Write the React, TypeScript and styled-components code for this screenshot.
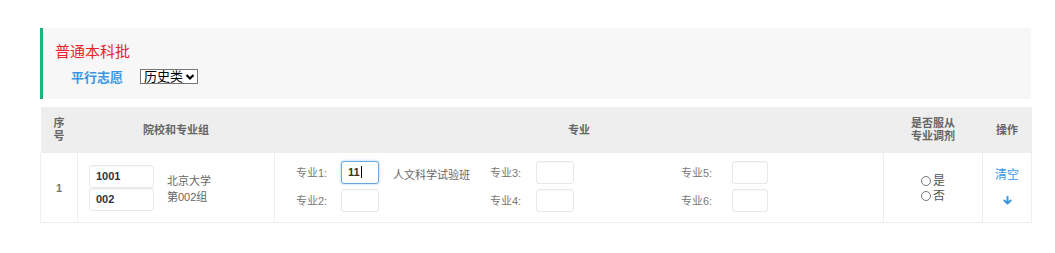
import React from "react";
import styled, { createGlobalStyle } from "styled-components";

const Global = createGlobalStyle`
  html, body { margin: 0; padding: 0; background: #fff; }
  body { font-family: "Liberation Sans", "Noto Sans CJK SC", sans-serif; color: #333; }
`;

const Page = styled.div`
  padding: 28px 0 0 40px;
  width: 991px;
`;

const Panel = styled.div`
  height: 71px;
  box-sizing: border-box;
  background: #f7f7f7;
  border-left: 3px solid #21b27c;
  padding: 15px 0 0 12px;
`;

const Title = styled.div`
  font-size: 15px;
  line-height: 18px;
  color: #e3262a;
`;

const FilterRow = styled.div`
  display: flex;
  align-items: center;
  gap: 17px;
  margin: 6px 0 0 16px;
`;

const FilterLabel = styled.span`
  font-size: 13px;
  font-weight: bold;
  color: #3a96e2;
`;

const FakeSelect = styled.span`
  display: inline-flex;
  align-items: center;
  gap: 2px;
  height: 15px;
  box-sizing: border-box;
  padding: 0 2px 0 3px;
  border: 1px solid #767676;
  background: #fff;
  font-size: 13px;
  line-height: 13px;
  color: #000;
`;

const Table = styled.table`
  margin-top: 8px;
  width: 991px;
  border-collapse: collapse;
  table-layout: fixed;
  font-size: 11px;
`;

const Th = styled.th<{ $w: number }>`
  width: ${(p) => p.$w}px;
  height: 46px;
  padding: 0;
  background: #eeeeee;
  color: #666;
  font-weight: bold;
  font-size: 11px;
  line-height: 13px;
  text-align: center;
`;

const Td = styled.td<{ $align?: string }>`
  height: 69px;
  padding: 0;
  border: 1px solid #eeeeee;
  border-top: none;
  text-align: ${(p) => p.$align || "center"};
  vertical-align: middle;
  color: #666;
`;

const SeqNum = styled.span`
  font-weight: bold;
  color: #777;
`;

const SchoolCell = styled.div`
  display: flex;
  align-items: center;
  padding-left: 11px;
  gap: 13px;
`;

const Stack = styled.div`
  display: flex;
  flex-direction: column;
`;

const Field = styled.span<{ $w: number; $focus?: boolean }>`
  display: flex;
  align-items: center;
  box-sizing: border-box;
  width: ${(p) => p.$w}px;
  height: 23px;
  padding-left: 6px;
  border: 1px solid ${(p) => (p.$focus ? "#6aa8de" : "#e8e8e8")};
  border-radius: 3px;
  background: #fff;
  box-shadow: ${(p) =>
    p.$focus ? "0 0 3px rgba(102,175,233,0.6)" : "inset 0 1px 1px rgba(0,0,0,0.03)"};
  font-size: 11px;
  font-weight: bold;
  color: #333;
`;

const Caret = styled.span`
  display: inline-block;
  width: 1px;
  height: 12px;
  background: #000;
  margin-left: 1px;
`;

const SchoolName = styled.div`
  font-size: 11px;
  line-height: 16px;
  color: #666;
  padding-top: 2px;
`;

const MajorGrid = styled.div`
  display: grid;
  grid-template-columns: 45px 38px 111px 46px 38px 107px 51px 36px;
  grid-template-rows: 23px 23px;
  row-gap: 5px;
  align-items: center;
  padding: 0 0 3px 21px;
  font-size: 11px;
`;

const Label = styled.span<{ $col: number; $row: number }>`
  grid-column: ${(p) => p.$col};
  grid-row: ${(p) => p.$row};
  color: #777;
`;

const Slot = styled.div<{ $col: number; $row: number }>`
  grid-column: ${(p) => p.$col};
  grid-row: ${(p) => p.$row};
`;

const MajorName = styled.span`
  grid-column: 3;
  grid-row: 1;
  padding-left: 14px;
  color: #666;
  align-self: start;
  padding-top: 5px;
`;

const RadioList = styled.div`
  display: inline-flex;
  flex-direction: column;
  align-items: flex-start;
  gap: 1px;
  font-size: 12px;
  line-height: 14px;
  color: #555;
  padding-top: 2px;
`;

const RadioItem = styled.span`
  display: inline-flex;
  align-items: center;
  gap: 2px;
`;

const Circle = styled.span`
  width: 10px;
  height: 10px;
  border: 1px solid #777;
  border-radius: 50%;
  box-sizing: border-box;
`;

const Ops = styled.div`
  display: flex;
  flex-direction: column;
  align-items: center;
  gap: 14px;
  padding-bottom: 2px;
`;

const OpLink = styled.span`
  font-size: 12px;
  line-height: 13px;
  color: #3a96e2;
`;

const ArrowDown = () => (
  <svg width="9" height="9" viewBox="0 0 10 10">
    <path d="M5 1 V8 M1.5 5 L5 8.5 L8.5 5" stroke="#3a96e2" strokeWidth="2.2" fill="none" strokeLinecap="round" strokeLinejoin="round" />
  </svg>
);

const Chevron = () => (
  <svg width="10" height="8" viewBox="0 0 10 8">
    <path d="M1.5 2 L5 5.5 L8.5 2" stroke="#000" strokeWidth="2.2" fill="none" />
  </svg>
);

export default function App() {
  return (
    <>
      <Global />
      <Page>
        <Panel>
          <Title>普通本科批</Title>
          <FilterRow>
            <FilterLabel>平行志愿</FilterLabel>
            <FakeSelect>
              历史类
              <Chevron />
            </FakeSelect>
          </FilterRow>
        </Panel>
        <Table>
          <thead>
            <tr>
              <Th $w={37}>
                序<br />号
              </Th>
              <Th $w={197}>院校和专业组</Th>
              <Th $w={609}>专业</Th>
              <Th $w={99}>
                是否服从
                <br />
                专业调剂
              </Th>
              <Th $w={49}>操作</Th>
            </tr>
          </thead>
          <tbody>
            <tr>
              <Td>
                <SeqNum>1</SeqNum>
              </Td>
              <Td $align="left">
                <SchoolCell>
                  <Stack>
                    <Field $w={65}>1001</Field>
                    <Field $w={65}>002</Field>
                  </Stack>
                  <SchoolName>
                    北京大学
                    <br />
                    第002组
                  </SchoolName>
                </SchoolCell>
              </Td>
              <Td $align="left">
                <MajorGrid>
                  <Label $col={1} $row={1}>专业1:</Label>
                  <Slot $col={2} $row={1}>
                    <Field $w={38} $focus>
                      11
                      <Caret />
                    </Field>
                  </Slot>
                  <MajorName>人文科学试验班</MajorName>
                  <Label $col={1} $row={2}>专业2:</Label>
                  <Slot $col={2} $row={2}>
                    <Field $w={38} />
                  </Slot>
                  <Label $col={4} $row={1}>专业3:</Label>
                  <Slot $col={5} $row={1}>
                    <Field $w={38} />
                  </Slot>
                  <Label $col={4} $row={2}>专业4:</Label>
                  <Slot $col={5} $row={2}>
                    <Field $w={38} />
                  </Slot>
                  <Label $col={7} $row={1}>专业5:</Label>
                  <Slot $col={8} $row={1}>
                    <Field $w={36} />
                  </Slot>
                  <Label $col={7} $row={2}>专业6:</Label>
                  <Slot $col={8} $row={2}>
                    <Field $w={36} />
                  </Slot>
                </MajorGrid>
              </Td>
              <Td>
                <RadioList>
                  <RadioItem>
                    <Circle />是
                  </RadioItem>
                  <RadioItem>
                    <Circle />否
                  </RadioItem>
                </RadioList>
              </Td>
              <Td>
                <Ops>
                  <OpLink>清空</OpLink>
                  <ArrowDown />
                </Ops>
              </Td>
            </tr>
          </tbody>
        </Table>
      </Page>
    </>
  );
}
